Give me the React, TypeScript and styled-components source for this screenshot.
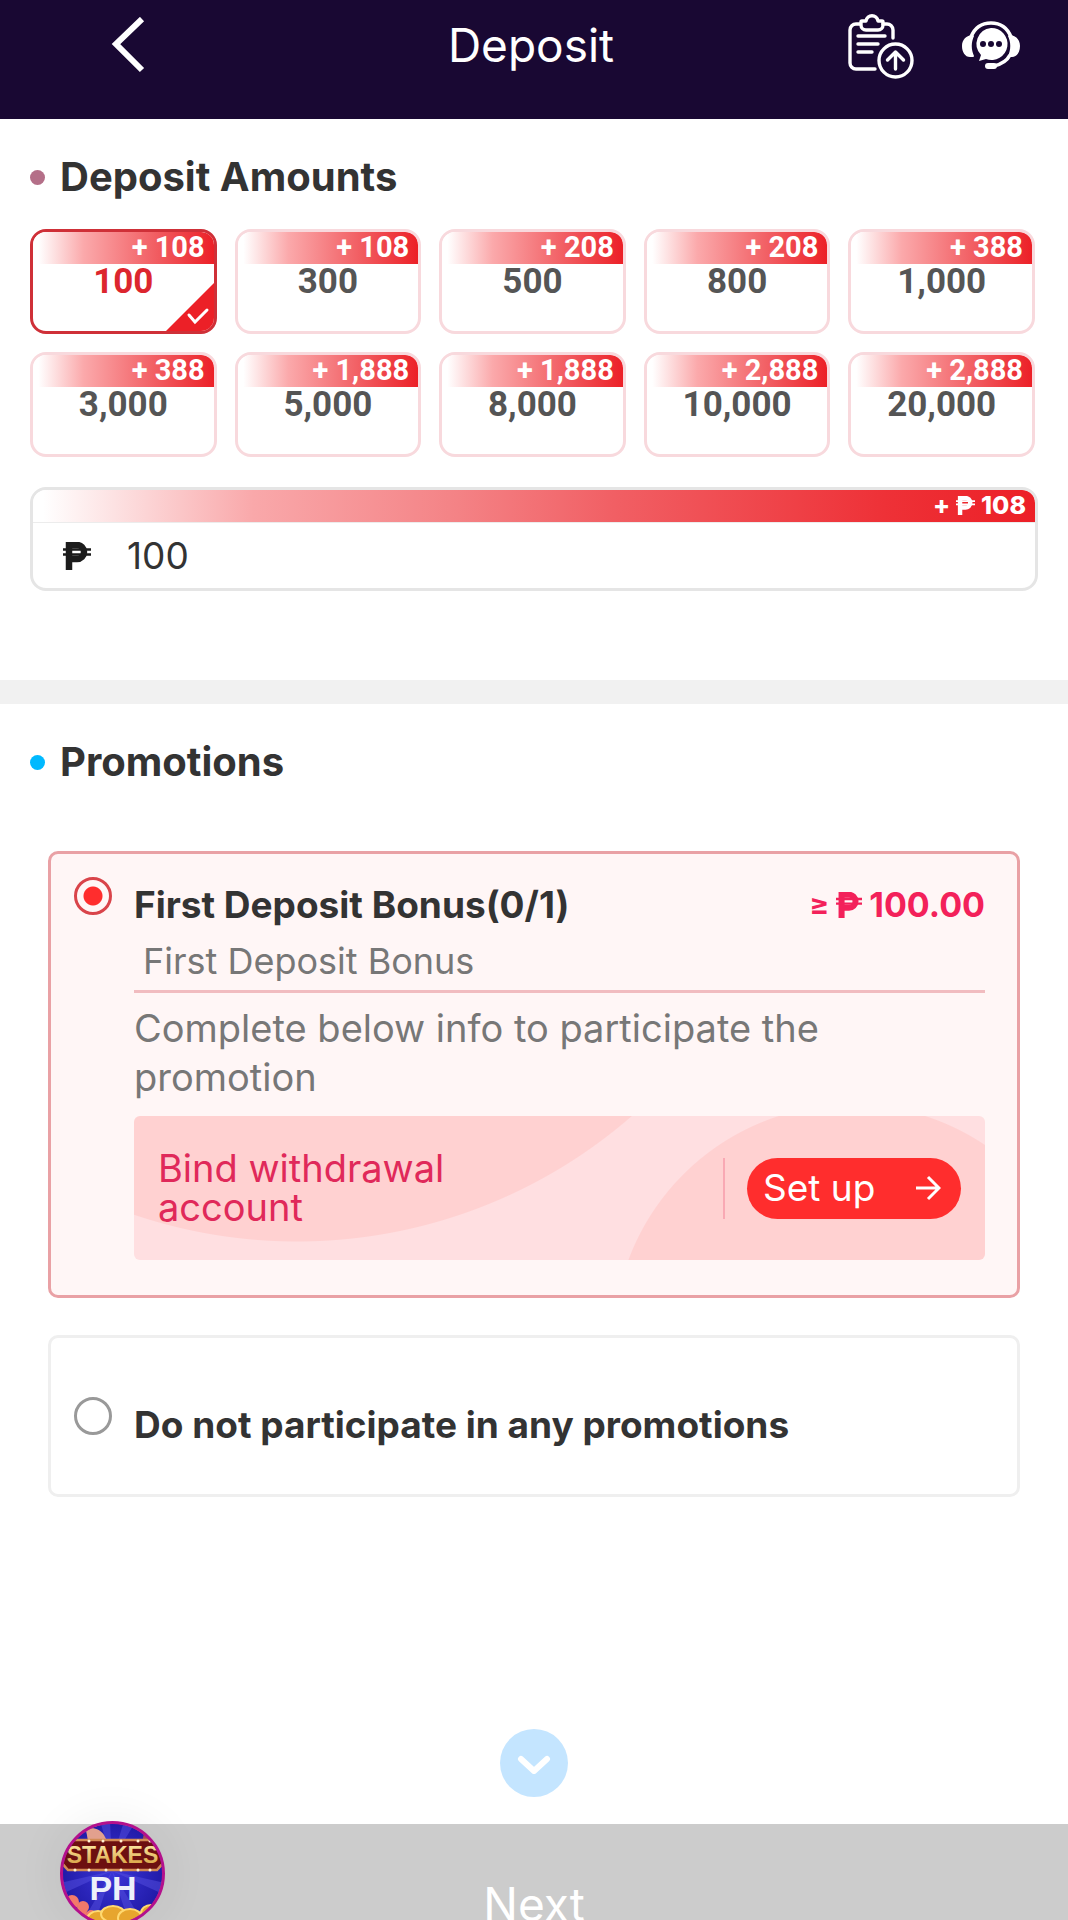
import React, { useState } from "react";
import styled, { createGlobalStyle } from "styled-components";

const GlobalStyle = createGlobalStyle`
  * {
    box-sizing: border-box;
  }
  body {
    margin: 0;
    background: #fff;
    color: #333;
    font-family: Inter, "Open Sans", sans-serif;
  }
  button, input {
    font-family: inherit;
    color: inherit;
  }
  h1, h2, h3, p {
    margin: 0;
  }
`;

const Page = styled.div`
  display: flex;
  flex-direction: column;
  min-height: 100vh;
  overflow: hidden;
`;

const Header = styled.header`
  display: grid;
  grid-template-columns: 1fr auto 1fr;
  align-items: start;
  height: 119px;
  padding: 12px 48px 0 110px;
  background: #190833;
  color: #fff;
`;

const Title = styled.h1`
  font-size: 46px;
  line-height: 66px;
  font-weight: 400;
  padding-right: 68px;
`;

const IconButton = styled.button`
  display: flex;
  align-items: center;
  height: 68px;
  padding: 0;
  border: 0;
  background: none;
  cursor: pointer;
`;

const HeaderActions = styled.div`
  display: flex;
  justify-content: flex-end;
  gap: 48px;
`;

const Section = styled.section`
  padding: 33px 30px 89px;
`;

const Divider = styled.hr`
  width: 100%;
  height: 24px;
  margin: 0;
  border: 0;
  background: #f1f1f1;
`;

const SectionTitle = styled.h2<{ $dot: string }>`
  display: flex;
  align-items: center;
  gap: 15px;
  font-size: 40px;
  line-height: 50px;
  font-weight: 700;
  &::before {
    content: "";
    width: 15px;
    height: 15px;
    border-radius: 50%;
    background: ${(p) => p.$dot};
  }
`;

const AmountGrid = styled.div`
  display: grid;
  grid-template-columns: repeat(5, 1fr);
  gap: 18px;
  margin: 27px 3px 30px 0;
`;

const Badge = styled.span`
  display: block;
  height: 32px;
  padding-right: 9px;
  border-radius: 0 12px 0 0;
  background: linear-gradient(90deg, #fff 3%, #fba9ab 28%, #f1595e 70%, #ec2027 100%);
  color: #fff;
  font-size: 29px;
  line-height: 30px;
  font-weight: 700;
  text-align: right;
`;

const AmountCard = styled.button<{ $active: boolean }>`
  position: relative;
  display: flex;
  flex-direction: column;
  height: 105px;
  padding: 0;
  border: 3px solid ${(p) => (p.$active ? "#cf3038" : "#f8d9dd")};
  border-radius: 16px;
  background: #fff;
  color: ${(p) => (p.$active ? "#dc262e" : "#555")};
  font-family: Roboto, sans-serif;
  font-size: 35px;
  line-height: 36px;
  font-weight: 700;
  overflow: hidden;
  cursor: pointer;
  ${Badge} {
    width: 100%;
  }
`;

const AmountValue = styled.span`
  width: 100%;
  text-align: center;
`;

const Corner = styled.svg`
  position: absolute;
  right: 0;
  bottom: 0;
`;

const Field = styled.label`
  display: block;
  border: 3px solid #e5e5e5;
  border-radius: 16px;
  overflow: hidden;
`;

const FieldBadge = styled(Badge)`
  background: linear-gradient(90deg, #fff 1%, #f9a8aa 22%, #f48386 42%, #f15f64 58%, #ee3137 85%, #ec2027 100%);
  font-size: 25px;
  font-weight: 800;
`;

const FieldRow = styled.span`
  display: flex;
  align-items: center;
  gap: 36px;
  height: 66px;
  padding: 0 30px;
  border-top: 1px solid #ececec;
  color: #1c1c1c;
`;

const AmountInput = styled.input`
  flex: 1;
  min-width: 0;
  padding: 0;
  border: 0;
  outline: 0;
  background: none;
  color: #333;
  font-size: 37px;
  line-height: 50px;
`;

const PromoList = styled.div`
  display: flex;
  flex-direction: column;
  gap: 37px;
  padding: 64px 18px 0;
`;

const PromoCard = styled.article<{ $active: boolean }>`
  display: flex;
  align-items: flex-start;
  gap: 22px;
  padding: ${(p) => (p.$active ? "23px 32px 35px 23px" : "59px 32px 41px 23px")};
  border: 3px solid ${(p) => (p.$active ? "#e9a1a5" : "#efefef")};
  border-radius: 10px;
  background: ${(p) => (p.$active ? "#fff6f6" : "#fff")};
`;

const Radio = styled.input`
  appearance: none;
  flex: none;
  width: 38px;
  height: 38px;
  margin: 0;
  border: 3px solid #999;
  border-radius: 50%;
  &:checked {
    border-color: #d9444a;
    background: radial-gradient(circle, #ff2d2d 9px, transparent 10px);
  }
`;

const PromoBody = styled.div`
  flex: 1;
  min-width: 0;
`;

const PromoHead = styled.div`
  display: flex;
  justify-content: space-between;
  font-size: 37px;
  line-height: 56px;
  font-weight: 700;
`;

const MinAmount = styled.span`
  display: flex;
  align-items: center;
  gap: 7px;
  color: #f3215a;
  font-size: 34px;
  small {
    font-size: 29px;
  }
`;

const PromoSub = styled.p`
  padding-left: 9px;
  border-bottom: 3px solid #f1bcc0;
  color: #777;
  font-size: 36px;
  line-height: 57px;
`;

const PromoText = styled.p`
  margin: 11px 0 14px;
  color: #777;
  font-size: 38px;
  line-height: 49px;
`;

const BindBox = styled.div`
  display: flex;
  align-items: center;
  height: 144px;
  padding: 0 24px;
  border-radius: 6px;
  background:
    radial-gradient(circle at 163px -384px, #ffd1d1 509px, transparent 510px),
    radial-gradient(circle at right 133px top 227px, #ffd1d1 238px, transparent 239px),
    #ffdfe1;
`;

const BindText = styled.p`
  width: 320px;
  margin-right: auto;
  color: #e0295a;
  font-size: 38px;
  line-height: 39px;
`;

const SetUpButton = styled.button`
  display: flex;
  align-items: center;
  justify-content: space-between;
  width: 214px;
  height: 61px;
  margin-left: 22px;
  padding: 0 20px 0 16px;
  border: 0;
  border-radius: 31px;
  background: #ff2d2d;
  color: #fff;
  font-size: 37px;
  line-height: 48px;
  cursor: pointer;
`;

const Rule = styled.span`
  width: 2px;
  height: 61px;
  background: #f9a9b4;
`;

const ScrollButton = styled.button`
  display: flex;
  align-items: center;
  justify-content: center;
  width: 68px;
  height: 68px;
  margin: auto auto 27px;
  padding: 0;
  border: 0;
  border-radius: 50%;
  background: #c4e5ff;
  cursor: pointer;
`;

const Footer = styled.footer`
  position: relative;
`;

const NextButton = styled.button`
  display: block;
  width: 100%;
  height: 96px;
  padding: 56px 0 0;
  border: 0;
  background: #ccc;
  color: #fff;
  font-size: 46px;
  line-height: 48px;
  overflow: hidden;
`;

const Brand = styled.a`
  position: absolute;
  top: -3px;
  left: 60px;
  width: 105px;
  height: 105px;
  border-radius: 50%;
  box-shadow: 0 0 50px rgba(0, 0, 0, 0.07);
`;

const Peso = ({ size, color = "currentColor" }: { size: number; color?: string }) => (
  <svg width={size} height={size} viewBox="0 0 28 28" fill="none" stroke={color} aria-label="₱">
    <path d="M6 28V3h8a7 7 0 0 1 0 14H6" strokeWidth="6.5" />
    <path d="M0 7.5h28M0 12.5h28" strokeWidth="2.6" />
  </svg>
);

const amounts = [
  { value: "100", bonus: "108" },
  { value: "300", bonus: "108" },
  { value: "500", bonus: "208" },
  { value: "800", bonus: "208" },
  { value: "1,000", bonus: "388" },
  { value: "3,000", bonus: "388" },
  { value: "5,000", bonus: "1,888" },
  { value: "8,000", bonus: "1,888" },
  { value: "10,000", bonus: "2,888" },
  { value: "20,000", bonus: "2,888" },
];

const BonusLine = styled.span`
  display: flex;
  align-items: center;
  justify-content: flex-end;
  gap: 6px;
`;

const RecordsIcon = () => (
  <svg width="66" height="66" viewBox="0 0 66 66" fill="none" stroke="#fff" strokeWidth="3.4" strokeLinecap="round" strokeLinejoin="round">
    <path d="M12 11H8a6 6 0 0 0-6 6v33a6 6 0 0 0 6 6h19M35 11h4a6 6 0 0 1 6 6v8" />
    <path d="M18 8c1-7 11-7 12 0h4a1 1 0 0 1 1 1v3a5 5 0 0 1-5 5H18a5 5 0 0 1-5-5V9a1 1 0 0 1 1-1z" />
    <path d="M10 23h27M10 31h20M10 39h14" />
    <circle cx="47.5" cy="47.5" r="16.5" />
    <path d="M47.5 56V39M39.5 47l8-8 8 8" />
  </svg>
);

const SupportIcon = () => (
  <svg width="58" height="50" viewBox="0 0 58 50" fill="#fff">
    <path d="M9 16C13 6 20 2 29 2s16 4 20 14" fill="none" stroke="#fff" strokeWidth="3.6" />
    <path d="M11 14C4 14 0 19 0 25s3 11 8 11h3a1 1 0 0 0 1-1c-3-7-3-13 0-20zM47 14c7 0 11 5 11 11s-3 11-8 11h-3a1 1 0 0 1-1-1c3-7 3-13 0-20z" />
    <path d="M29 7a16 16 0 1 1-5 31l-7 2 2-6A16 16 0 0 1 29 7z" />
    <path d="M48 34c-3 6-8 9-16 11" fill="none" stroke="#fff" strokeWidth="3.6" />
    <rect x="23" y="42" width="12" height="6" rx="3" />
    <g fill="#190833">
      <circle cx="21" cy="23" r="3" />
      <circle cx="29" cy="23" r="3" />
      <circle cx="37" cy="23" r="3" />
    </g>
  </svg>
);

const BrandLogo = () => (
  <svg width="105" height="105" viewBox="0 0 105 105">
    <defs>
      <clipPath id="disc">
        <circle cx="52.5" cy="52.5" r="50" />
      </clipPath>
      <radialGradient id="night">
        <stop offset="0" stopColor="#3b35d8" />
        <stop offset="1" stopColor="#201aa6" />
      </radialGradient>
      <linearGradient id="gold" x1="0" y1="0" x2="0" y2="1">
        <stop offset="0" stopColor="#ffefb0" />
        <stop offset="1" stopColor="#d49a35" />
      </linearGradient>
    </defs>
    <g clipPath="url(#disc)">
      <rect width="105" height="105" fill="url(#night)" />
      <path d="M52 40 40 0h10zM52 40 64 0h12zM52 40 15 0h12zM52 50 0 62v12zM52 50l53 12v12zM52 50 20 105h14zM52 50l33 55H70z" fill="#5550df" opacity="0.5" />
      <path d="M26 9c6-4 14-1 18 5l3 6H28z" fill="#e2a08e" />
      <path d="M84 12l14 2v8H82z" fill="#a34a58" />
      <path d="M8 19h89l8 10v11l-8 9H8l-8-9V29z" fill="#6d1010" stroke="#d38b55" strokeWidth="2.5" />
      <g fill="#fff0cf">
        {[29, 43, 61, 78, 90].map((x) => (
          <circle key={x} cx={x} cy="20" r="1.5" />
        ))}
        {[15, 29, 46, 61, 78, 90].map((x) => (
          <circle key={x} cx={x} cy="49" r="1.5" />
        ))}
      </g>
      <text x="52.5" y="42" textAnchor="middle" fontFamily="Liberation Sans, sans-serif" fontWeight="700" fontSize="23" fill="url(#gold)">
        STAKES
      </text>
      <text x="53" y="79" textAnchor="middle" fontFamily="Liberation Sans, sans-serif" fontWeight="700" fontSize="34" fill="#edf0fa">
        PH
      </text>
      <g fill="#f2796a">
        <circle cx="12" cy="81" r="7" />
        <circle cx="23" cy="86" r="6" />
        <circle cx="20" cy="97" r="9" />
        <circle cx="31" cy="94" r="5" />
      </g>
      <g fill="#e7a52e" stroke="#ffd970" strokeWidth="2">
        <ellipse cx="38" cy="99" rx="11" ry="9" />
        <ellipse cx="53" cy="93" rx="12" ry="8" />
        <ellipse cx="70" cy="97" rx="12" ry="9" />
        <ellipse cx="91" cy="92" rx="10" ry="8" />
      </g>
    </g>
    <circle cx="52.5" cy="52.5" r="51" fill="none" stroke="#b3108c" strokeWidth="3" />
  </svg>
);

const App = () => {
  const [amount, setAmount] = useState("100");
  const [promo, setPromo] = useState("first");

  return (
    <Page>
      <GlobalStyle />
      <Header>
        <IconButton aria-label="Back">
          <svg width="36" height="58" viewBox="0 0 36 58" fill="none" stroke="#fff" strokeWidth="6">
            <path d="M32 2 6 27l26 26" />
          </svg>
        </IconButton>
        <Title>Deposit</Title>
        <HeaderActions>
          <IconButton aria-label="Deposit records">
            <RecordsIcon />
          </IconButton>
          <IconButton aria-label="Support">
            <SupportIcon />
          </IconButton>
        </HeaderActions>
      </Header>

      <Section>
        <SectionTitle $dot="#b46f88">Deposit Amounts</SectionTitle>
        <AmountGrid>
          {amounts.map(({ value, bonus }) => (
            <AmountCard
              key={value}
              type="button"
              $active={value === amount}
              aria-pressed={value === amount}
              onClick={() => setAmount(value)}
            >
              <Badge>+ {bonus}</Badge>
              <AmountValue>{value}</AmountValue>
              {value === amount && (
                <Corner width="48" height="48" viewBox="0 0 48 48" fill="none">
                  <path d="M48 0v48H0z" fill="#ec2027" />
                  <path d="m23 32 6 7 12-12" stroke="#fff" strokeWidth="3" strokeLinecap="round" />
                </Corner>
              )}
            </AmountCard>
          ))}
        </AmountGrid>
        <Field>
          <FieldBadge>
            <BonusLine>
              + <Peso size={19} /> 108
            </BonusLine>
          </FieldBadge>
          <FieldRow>
            <Peso size={28} />
            <AmountInput
              aria-label="Amount"
              value={amount}
              onChange={(e) => setAmount(e.target.value)}
            />
          </FieldRow>
        </Field>
      </Section>

      <Divider />

      <Section>
        <SectionTitle $dot="#00b9ff">Promotions</SectionTitle>
        <PromoList>
          <PromoCard $active={promo === "first"}>
            <Radio
              type="radio"
              name="promo"
              id="first"
              checked={promo === "first"}
              onChange={() => setPromo("first")}
            />
            <PromoBody>
              <PromoHead>
                <label htmlFor="first">First Deposit Bonus(0/1)</label>
                <MinAmount>
                  <small>≥</small>
                  <Peso size={26} />
                  100.00
                </MinAmount>
              </PromoHead>
              <PromoSub>First Deposit Bonus</PromoSub>
              <PromoText>Complete below info to participate the promotion</PromoText>
              <BindBox>
                <BindText>Bind withdrawal account</BindText>
                <Rule />
                <SetUpButton type="button">
                  Set up
                  <svg width="26" height="26" viewBox="0 0 26 26" fill="none" stroke="#fff" strokeWidth="3">
                    <path d="M1 13h22M13 2l11 11-11 11" />
                  </svg>
                </SetUpButton>
              </BindBox>
            </PromoBody>
          </PromoCard>
          <PromoCard $active={promo === "none"}>
            <Radio
              type="radio"
              name="promo"
              id="none"
              checked={promo === "none"}
              onChange={() => setPromo("none")}
            />
            <PromoHead as="label" htmlFor="none">
              Do not participate in any promotions
            </PromoHead>
          </PromoCard>
        </PromoList>
      </Section>

      <ScrollButton type="button" aria-label="Scroll down">
        <svg width="34" height="22" viewBox="0 0 34 22" fill="none" stroke="#fff" strokeWidth="6" strokeLinecap="round" strokeLinejoin="round">
          <path d="m4 7 13 12L30 7" />
        </svg>
      </ScrollButton>
      <Footer>
        <NextButton type="button">Next</NextButton>
        <Brand href="#" aria-label="Stakes PH">
          <BrandLogo />
        </Brand>
      </Footer>
    </Page>
  );
};

export default App;
